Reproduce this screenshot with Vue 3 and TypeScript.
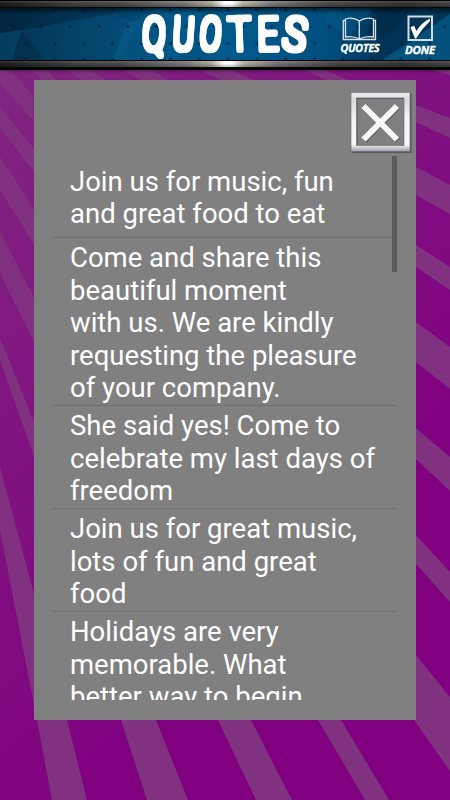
<script setup lang="ts">
interface Glyph {
  ch: string
  x: number
  w: number
  tilt: number
}

const title: Glyph[] = [
  { ch: 'Q', x: 154, w: 0.72, tilt: 3 },
  { ch: 'U', x: 183.5, w: 0.68, tilt: 4 },
  { ch: 'O', x: 210.7, w: 0.66, tilt: 5 },
  { ch: 'T', x: 239.5, w: 0.84, tilt: -2 },
  { ch: 'E', x: 268, w: 0.8, tilt: -1 },
  { ch: 'S', x: 295, w: 0.86, tilt: 10 },
]

const quotes: string[] = [
  'Join us for music, fun\nand great food to eat',
  'Come and share this\nbeautiful moment\nwith us. We are kindly\nrequesting the pleasure\nof your company.',
  'She said yes! Come to\ncelebrate my last days of\nfreedom',
  'Join us for great music,\nlots of fun and great\nfood',
  'Holidays are very\nmemorable. What\nbetter way to begin',
]

const rays: string[] = [
  '0,70 11,70 33,96 33,120 0,83',
  '32,70 48,70 58,82 44,82',
  '68,70 90,70 108,82 84,82',
  '124,70 152,70 170,82 143,82',
  '200,70 232,70 258,82 225,82',
  '305,70 325,70 352,82 330,82',
  '0,107 34,149 34,171 0,128',
  '0,157 34,209 34,244 0,190',
  '0,232 34,297 34,342 0,273',
  '0,338 34,422 34,456 0,360',
  '0,467 34,594 67,720 87,800 52,800 37,720 0,530',
  '121,720 156,720 188,800 147,800',
  '218,720 251,720 292,800 256,800',
  '318,720 341,720 389,800 365,800',
  '416,655 450,697 450,771 414,720',
  '416,105 450,118 450,138 416,122',
  '416,167 450,185 450,214 416,195',
  '416,245 450,267 450,290 416,267',
  '416,322 450,347 450,389 416,362',
  '416,428 450,457 450,491 416,459',
  '416,535 450,572 450,602 416,564',
  '432,70 450,70 450,75',
]

const dots: number[][] = []
for (let i = 0; i < 16; i++) {
  dots.push([12.5 + i * 28.8, 26.5], [26.5 + i * 28.8, 43.5], [26.5 + i * 28.8, 10], [26.5 + i * 28.8, 59])
}
</script>

<template>
  <main class="screen">
    <svg class="rays" viewBox="0 0 450 800" aria-hidden="true">
      <defs>
        <linearGradient id="base" x1="0" y1="0" x2="450" y2="450" gradientUnits="userSpaceOnUse">
          <stop offset="0" stop-color="#802880" />
          <stop offset=".5" stop-color="#801480" />
          <stop offset="1" stop-color="#800080" />
        </linearGradient>
      </defs>
      <rect width="450" height="800" fill="url(#base)" />
      <polygon v-for="r in rays" :key="r" :points="r" fill="#803280" />
    </svg>

    <header class="bar">
      <div class="rail"></div>
      <svg class="banner" viewBox="0 8 450 52" width="450" height="52">
        <defs>
          <linearGradient id="blue">
            <stop offset="0" stop-color="#032b46" />
            <stop offset=".25" stop-color="#03436a" />
            <stop offset=".5" stop-color="#005a8d" />
            <stop offset=".72" stop-color="#005080" />
            <stop offset=".85" stop-color="#003456" />
            <stop offset="1" stop-color="#003555" />
          </linearGradient>
          <linearGradient id="shade" x1="0" y1="0" x2="0" y2="1">
            <stop offset="0" stop-opacity=".55" />
            <stop offset=".12" stop-opacity="0" />
            <stop offset="1" stop-opacity="0" />
          </linearGradient>
          <filter id="brush" filterUnits="userSpaceOnUse" x="130" y="6" width="190" height="56" color-interpolation-filters="sRGB">
            <feMorphology operator="dilate" radius="2" />
            <feGaussianBlur stdDeviation="1.3" />
            <feComponentTransfer>
              <feFuncR type="linear" slope="0" intercept="1" />
              <feFuncG type="linear" slope="0" intercept="1" />
              <feFuncB type="linear" slope="0" intercept="1" />
              <feFuncA type="linear" slope="3.5" intercept="-1.3" />
            </feComponentTransfer>
          </filter>
        </defs>
        <rect y="8" width="450" height="52" fill="url(#blue)" />
        <polygon points="0,33 22,30 50,8 0,8" fill="#001d33" opacity=".35" />
        <polygon points="22,30 105,15 130,8 50,8" fill="#001d33" opacity=".25" />
        <polygon points="22,30 105,15 140,21 118,60 45,60" fill="#0973a5" opacity=".14" />
        <polygon points="0,33 22,30 12,60 0,60" fill="#0973a5" opacity=".25" />
        <polygon points="127,24 160,8 200,8 180,60 112,60" fill="#087bb4" opacity=".2" />
        <polygon points="382,60 410,42 450,14 450,60" fill="#0979b0" opacity=".42" />
        <polygon points="330,8 375,8 350,35 325,24" fill="#086ca0" opacity=".25" />
        <polygon points="375,8 412,8 392,34 365,42" fill="#001c33" opacity=".3" />
        <circle v-for="(d, i) in dots" :key="i" :cx="d[0]" :cy="d[1]" r="1.8" fill="#001b31" opacity=".55" />
        <rect y="8" width="450" height="52" fill="url(#shade)" />

        <g class="title" filter="url(#brush)">
          <text
            v-for="g in title"
            :key="g.ch"
            :transform="`translate(${g.x} 50.5) rotate(${g.tilt} 0 -16) scale(${g.w} 1)`"
          >{{ g.ch }}</text>
        </g>

        <g class="book">
          <path d="M345 20.5H343.3V39.5H375.5V20.5H374" />
          <path d="M345.5 37V19Q353 16.5 359.3 21Q366 16.5 373.5 19V37Q366 35.5 359.3 39Q353 35.5 345.5 37Z" />
          <path d="M359.3 21V40" />
        </g>
        <text class="caption" x="340.5" y="51.5" textLength="39" lengthAdjust="spacingAndGlyphs">QUOTES</text>

        <rect class="box" x="408.5" y="16.5" width="23.5" height="23.5" />
        <path class="tick" d="M410.5 27.5L414 25.5L416.5 31Q421 23 430 18.5V21Q422 28.5 416 38.5H415Z" />
        <text class="caption" x="405" y="53.5" textLength="30" lengthAdjust="spacingAndGlyphs">DONE</text>
      </svg>
      <div class="rail"></div>
    </header>

    <section class="panel">
      <button class="close" type="button" aria-label="Close">
        <svg viewBox="0.5 1 62 62" width="62" height="62">
          <defs>
            <linearGradient id="steel" x1="0" y1="0" x2="0" y2="1">
              <stop offset="0" stop-color="#eeeef0" />
              <stop offset=".12" stop-color="#dadade" />
              <stop offset=".45" stop-color="#f4f4f7" />
              <stop offset=".88" stop-color="#f9f9fa" />
              <stop offset="1" stop-color="#9a9ea8" />
            </linearGradient>
          </defs>
          <path class="frame-shadow" fill-rule="evenodd" d="M2 2H62V62H2ZM8 8H56V56H8Z" />
          <path fill="url(#steel)" fill-rule="evenodd" d="M1.5 1.5H60.5V60.5H1.5ZM7 7V54.5H54.5V7Z" />
          <path class="edge" d="M1.5 1.5H60.5V60.5H1.5ZM7 7H54.5V54.5H7Z" />
          <path class="x-shadow" d="M14.5 15.5L48.5 49.5M48.5 15.5L14.5 49.5" />
          <path class="x" d="M14 15L47.5 48.5M47.5 15L14 48.5" />
        </svg>
      </button>
      <div class="viewport">
        <ul class="list">
          <li v-for="q in quotes" :key="q">{{ q }}</li>
        </ul>
        <div class="thumb"></div>
      </div>
    </section>
  </main>
</template>

<style>
body {
  margin: 0;
  background: #800080;
}
</style>

<style scoped>
.screen {
  position: relative;
  width: 450px;
  height: 800px;
  overflow: hidden;
  font-family: Roboto, "Liberation Sans", sans-serif;
}
.rays {
  position: absolute;
  inset: 0;
}
.bar {
  position: relative;
  height: 70px;
  background: #000;
  box-shadow: 0 1px 3px rgba(0, 0, 0, 0.4);
}
.rail {
  height: 8px;
  box-sizing: border-box;
  border-top: 1px solid #000;
  border-bottom: 1px solid #080808;
  background:
    linear-gradient(rgba(255, 255, 255, 0.12), transparent 40%, rgba(0, 0, 0, 0.25)),
    linear-gradient(90deg, #1c1c1c, #424242 17%, #4b4b4b 27%, #777 41%, #aaa795 47%, #fff 50%, #fff 51.5%, #b5b0a0 54%, #777 61%, #494949 73%, #333 90%, #444 100%);
}
.banner {
  display: block;
  overflow: visible;
}
.title text {
  font: 300 47px Roboto, sans-serif;
  fill: #fff;
  stroke: #fff;
  stroke-width: 0.8px;
  stroke-linejoin: round;
  text-anchor: middle;
}
.book path {
  fill: none;
  stroke: #d9e2ea;
  stroke-width: 1.3;
}
.caption {
  font: italic 600 11.5px "Open Sans", sans-serif;
  fill: #fff;
  stroke: #fff;
  stroke-width: 0.7px;
  stroke-linejoin: round;
}
.box {
  fill: none;
  stroke: #d5dce5;
  stroke-width: 2;
}
.tick {
  fill: #fff;
}
.panel {
  position: relative;
  box-sizing: border-box;
  width: 382.5px;
  height: 640px;
  margin: 10px 0 0 33.5px;
  padding: 12px 4px 20px 18.5px;
  display: flex;
  flex-direction: column;
  background: #808080;
}
.close {
  align-self: flex-end;
  width: 62px;
  height: 62px;
  padding: 0;
  border: 0;
  background: none;
}
.close svg {
  display: block;
}
.frame-shadow {
  fill: #444;
  opacity: 0.65;
}
.edge {
  fill: none;
  stroke: #65656b;
  stroke-width: 0.6;
}
.x-shadow {
  stroke: #555;
  stroke-width: 6.5;
  opacity: 0.6;
}
.x {
  stroke: #f7f7f7;
  stroke-width: 6;
}
.viewport {
  position: relative;
  flex: 1;
  width: 345px;
  overflow: hidden;
}
.list {
  margin: 0;
  padding: 7.5px 0 0;
  list-style: none;
}
.list li {
  padding: 4.2px 18px 0;
  border-bottom: 1px solid #707070;
  color: #fff;
  font-size: 27.5px;
  line-height: 32.6px;
  white-space: pre;
}
.list li:first-child {
  padding-bottom: 5.9px;
}
.thumb {
  position: absolute;
  top: 2px;
  right: 0;
  width: 5px;
  height: 116px;
  background: #5c5c5c;
}
</style>
